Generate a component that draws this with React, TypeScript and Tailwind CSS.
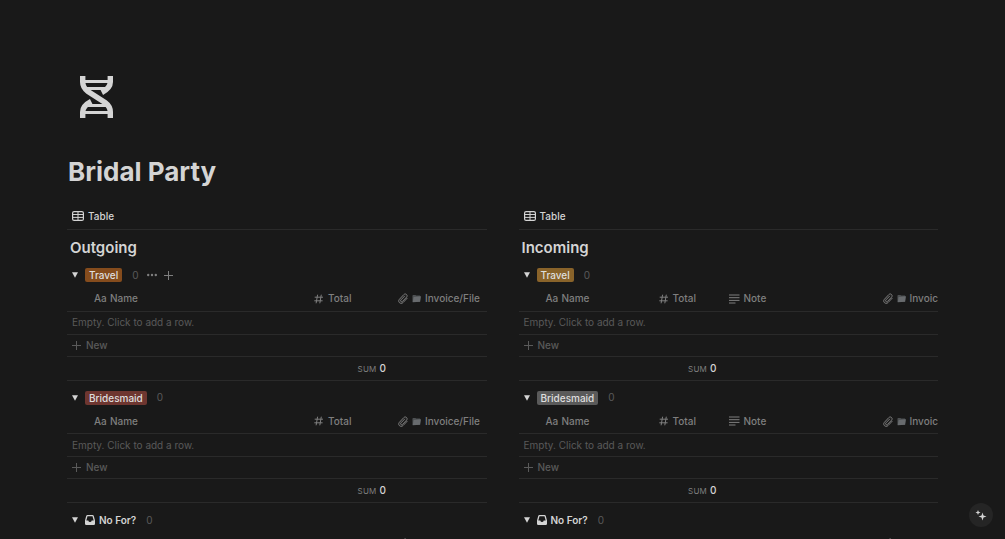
import React, { useState } from 'react';

interface Column {
  label: string;
  icon: 'title' | 'number' | 'text' | 'file';
  width: string;
}

interface Group {
  label: string;
  tag?: string;
  actions?: boolean;
}

interface Database {
  title: string;
  tableWidth: string;
  columns: Column[];
  groups: Group[];
}

const databases: Database[] = [
  {
    title: 'Outgoing',
    tableWidth: 'w-full',
    columns: [
      { label: 'Name', icon: 'title', width: 'w-60' },
      { label: 'Total', icon: 'number', width: 'w-[84px]' },
      { label: 'Invoice/File', icon: 'file', width: 'w-auto' },
    ],
    groups: [
      { label: 'Travel', tag: 'bg-[#854c1d]', actions: true },
      { label: 'Bridesmaid', tag: 'bg-[#6e3630]' },
      { label: 'No For?' },
    ],
  },
  {
    title: 'Incoming',
    tableWidth: 'w-[487px]',
    columns: [
      { label: 'Name', icon: 'title', width: 'w-[133px]' },
      { label: 'Total', icon: 'number', width: 'w-[70px]' },
      { label: 'Note', icon: 'text', width: 'w-[154px]' },
      { label: 'Invoice/File', icon: 'file', width: 'w-auto' },
    ],
    groups: [
      { label: 'Travel', tag: 'bg-[#89632a]' },
      { label: 'Bridesmaid', tag: 'bg-[#5a5a5a]' },
      { label: 'No For?' },
    ],
  },
];

function DnaIcon() {
  return (
    <svg width="33" height="42" viewBox="0 0 33 42" fill="none" stroke="#d4d4d4" className="block">
      <path
        d="M2.700 0V6C2.700 10 4 12.500 8 15.500L25 26.500C29 29.500 30.300 32 30.300 36V42"
        strokeWidth="5.400"
      />
      <path
        d="M30.300 0V6C30.300 10 28.500 13 21.800 16.500M2.700 42V36C2.700 32 4.500 29 11.200 25.500"
        strokeWidth="5.400"
      />
      <path d="M3 5.500H30M6 12.500H27M6 29.500H27M3 36.500H30" strokeWidth="3" />
    </svg>
  );
}

function TableIcon() {
  return (
    <svg width="12" height="10" viewBox="0 0 12 10" fill="none" stroke="currentColor" className="shrink-0">
      <rect x="0.6" y="0.6" width="10.800" height="8.800" rx="1.500" strokeWidth="1.200" />
      <path d="M0.600 3.500H11.400M0.600 6.400H11.400M6 0.600V9.400" strokeWidth="1" />
    </svg>
  );
}

function PlusIcon() {
  return (
    <svg width="9" height="9" viewBox="0 0 9 9" stroke="currentColor" className="shrink-0">
      <path d="M4.500 0V9M0 4.500H9" strokeWidth="1" />
    </svg>
  );
}

function DotsIcon() {
  return (
    <svg width="10" height="4" viewBox="0 0 10 4" fill="currentColor" className="shrink-0">
      <circle cx="1.200" cy="2" r="1.200" />
      <circle cx="5" cy="2" r="1.200" />
      <circle cx="8.800" cy="2" r="1.200" />
    </svg>
  );
}

function InboxIcon() {
  return (
    <svg width="10" height="10" viewBox="0 0 10 10" fill="currentColor" className="shrink-0">
      <path
        fillRule="evenodd"
        d="M2.400 0H7.600Q8.500 0 8.800 0.900L10 5.500V8.800Q10 10 8.800 10H1.200Q0 10 0 8.800V5.500L1.200 0.900Q1.500 0 2.400 0ZM2.500 1.200L1.300 5.500H3.300Q3.600 7.100 5 7.100T6.700 5.500H8.700L7.500 1.200Z"
      />
    </svg>
  );
}

function FolderIcon() {
  return (
    <svg width="9" height="9" viewBox="0 0 10 9" className="shrink-0">
      <path d="M0.500 1.500L1 0.500H3.800L4.500 1.200H9V8L1 8.500L0.500 8Z" fill="#4d5052" />
      <path d="M1.800 2.800L10 2L9 8L0.800 8.700Z" fill="#686b6e" />
    </svg>
  );
}

function ColumnIcon({ icon }: { icon: Column['icon'] }) {
  if (icon === 'title') {
    return <span className="w-3">Aa</span>;
  }
  if (icon === 'number') {
    return (
      <svg width="10" height="10" viewBox="0 0 10 10" stroke="currentColor" className="shrink-0">
        <path d="M3.600 0.700L2.100 9.300M7.300 0.700L5.800 9.300M0.700 3.200H9M0.300 6.800H8.600" strokeWidth="1" />
      </svg>
    );
  }
  if (icon === 'text') {
    return (
      <svg width="11" height="10" viewBox="0 0 11 10" stroke="currentColor" className="shrink-0">
        <path d="M0 1H10.500M0 3.700H10.500M0 6.400H10.500M0 9H6.500" strokeWidth="1" />
      </svg>
    );
  }
  return (
    <svg
      width="10"
      height="11"
      viewBox="0 0 10 11"
      fill="none"
      stroke="currentColor"
      strokeLinecap="round"
      className="shrink-0"
    >
      <path
        d="M9.200 5.200L5 9.600C2.500 11.800 -0.700 8.700 1.400 6.300L5.800 1.600C7.700 -0.200 10.200 2.200 8.600 4.100L4.500 8.400C3.300 9.400 1.900 8.100 2.900 6.900L6.600 3.100"
        strokeWidth="1"
      />
    </svg>
  );
}

function GroupSection({ group, columns, tableWidth }: { group: Group } & Pick<Database, 'columns' | 'tableWidth'>) {
  const [open, setOpen] = useState(true);

  return (
    <section className="mb-[5px]">
      <div className="flex h-6 items-center pl-[5px]">
        <button
          type="button"
          aria-label={`Toggle ${group.label}`}
          aria-expanded={open}
          onClick={() => setOpen(!open)}
          className="mr-[7px] text-[#d4d4d4]"
        >
          <svg width="6" height="6" viewBox="0 0 6 6" fill="currentColor" className={open ? '' : '-rotate-90'}>
            <path d="M0 0.300H6L3 5.700Z" />
          </svg>
        </button>
        {group.tag ? (
          <span className={`rounded-xs px-1 text-[10px] leading-[14px] font-medium text-[#dedede] ${group.tag}`}>
            {group.label}
          </span>
        ) : (
          <span className="flex items-center gap-1 text-[10px] font-semibold text-[#d4d4d4]">
            <InboxIcon />
            {group.label}
          </span>
        )}
        <span className="ml-2 px-0.5 text-[10px] text-[#5a5a5a]">0</span>
        {group.actions && (
          <span className="ml-1.5 flex items-center gap-[7px] text-[#7f7f7f]">
            <button type="button" aria-label="Group options">
              <DotsIcon />
            </button>
            <button type="button" aria-label="Add row">
              <PlusIcon />
            </button>
          </span>
        )}
      </div>
      {open && (
        <table className={`table-fixed border-collapse text-[10px] ${tableWidth}`}>
          <thead>
            <tr className="h-6 border-b border-[#2a2a2a] text-[#7f7f7f]">
              {columns.map((column) => (
                <th
                  key={column.label}
                  className={`p-0 text-left font-medium ${column.icon === 'title' ? 'pl-[27px]' : 'pl-[7px]'} ${column.width}`}
                >
                  <span className="flex items-center gap-1 whitespace-nowrap">
                    <ColumnIcon icon={column.icon} />
                    {column.icon === 'file' && <FolderIcon />}
                    {column.label}
                  </span>
                </th>
              ))}
            </tr>
          </thead>
          <tbody>
            <tr className="h-[23px] border-b border-[#2a2a2a] text-[#5a5a5a]">
              <td colSpan={columns.length} className="p-0 pl-[5px]">
                Empty. Click to add a row.
              </td>
            </tr>
            <tr className="h-[22px] border-b border-[#2a2a2a] text-[#5a5a5a]">
              <td colSpan={columns.length} className="p-0 pl-[5px]">
                <button type="button" className="flex items-center gap-[5px] font-medium">
                  <PlusIcon />
                  New
                </button>
              </td>
            </tr>
          </tbody>
          <tfoot>
            <tr className="h-6 border-b border-[#2a2a2a]">
              <td className="p-0" />
              <td className="p-0 pr-[5px] text-right font-medium whitespace-nowrap text-[#d4d4d4]">
                <span className="mr-[3px] text-[8px] font-normal tracking-wide text-[#7f7f7f] uppercase">Sum</span>0
              </td>
              <td colSpan={columns.length - 2} className="p-0" />
            </tr>
          </tfoot>
        </table>
      )}
    </section>
  );
}

function DatabaseView({ database }: { database: Database }) {
  return (
    <div className="min-w-0 overflow-hidden">
      <div className="flex h-[27px] items-center border-b border-[#2a2a2a] pl-[5px]">
        <button type="button" className="flex items-center gap-1 text-[10px] font-medium text-[#d4d4d4]">
          <TableIcon />
          Table
        </button>
      </div>
      <h2 className="pt-1.5 pb-[3px] pl-[3px] text-[15px] leading-6 font-semibold text-[#d4d4d4]">{database.title}</h2>
      {database.groups.map((group) => (
        <GroupSection
          key={group.label}
          group={group}
          columns={database.columns}
          tableWidth={database.tableWidth}
        />
      ))}
    </div>
  );
}

export default function App() {
  return (
    <div className="h-screen overflow-y-auto bg-[#191919] font-['Inter',sans-serif] [scrollbar-width:none]">
      <main className="px-[67px] pt-19">
        <div className="pl-[13px]">
          <DnaIcon />
        </div>
        <h1 className="mt-9 pl-px text-[26px] leading-9 font-bold text-[#d4d4d4]">Bridal Party</h1>
        <div className="mt-[13px] grid grid-cols-2 gap-8">
          {databases.map((database) => (
            <DatabaseView key={database.title} database={database} />
          ))}
        </div>
      </main>
      <button
        type="button"
        aria-label="Ask AI"
        className="fixed right-3 bottom-3 flex size-6 items-center justify-center rounded-full bg-[#252525] text-[#d4d4d4]"
      >
        <svg width="12" height="12" viewBox="0 0 12 12" fill="currentColor">
          <path d="M7.500 3.500L8.500 6.500L11.500 7.500L8.500 8.500L7.500 11.500L6.500 8.500L3.500 7.500L6.500 6.500Z" />
          <path d="M3 1L3.700 2.800L5.500 3.500L3.700 4.200L3 6L2.300 4.200L0.500 3.500L2.300 2.800Z" />
        </svg>
      </button>
    </div>
  );
}
